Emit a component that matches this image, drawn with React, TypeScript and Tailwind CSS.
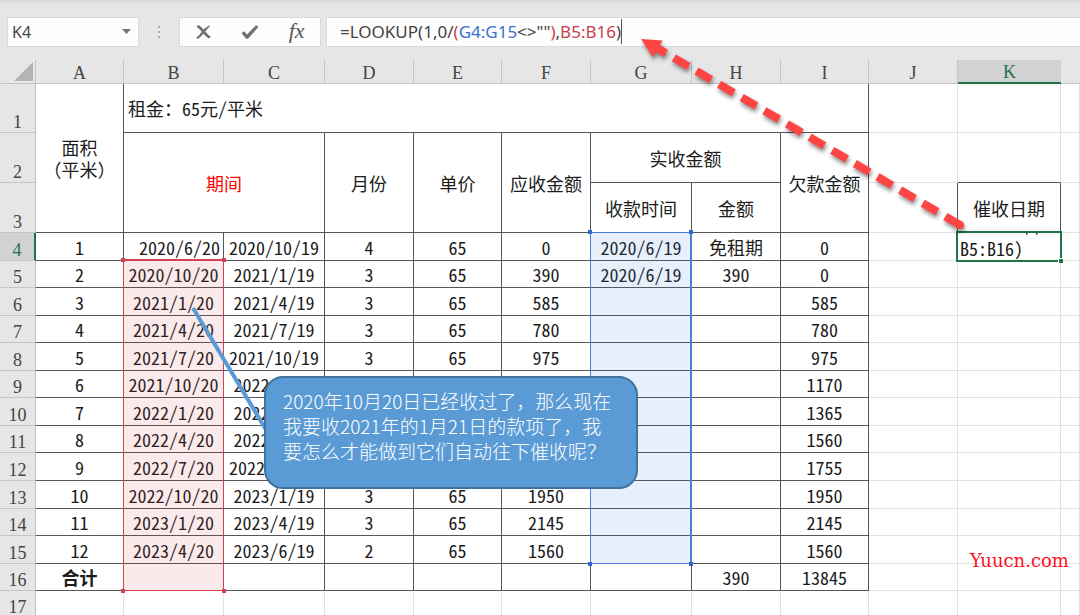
import type { ReactNode } from "react";

type Row = {
  no: number;
  height: string;
  cells: string[];
};

const rows: Row[] = [
  { no: 4, height: "h-[28px]", cells: ["1", "2020/6/20", "2020/10/19", "4", "65", "0", "2020/6/19", "免租期", "0"] },
  { no: 5, height: "h-[27px]", cells: ["2", "2020/10/20", "2021/1/19", "3", "65", "390", "2020/6/19", "390", "0"] },
  { no: 6, height: "h-[28px]", cells: ["3", "2021/1/20", "2021/4/19", "3", "65", "585", "", "", "585"] },
  { no: 7, height: "h-[27px]", cells: ["4", "2021/4/20", "2021/7/19", "3", "65", "780", "", "", "780"] },
  { no: 8, height: "h-[28px]", cells: ["5", "2021/7/20", "2021/10/19", "3", "65", "975", "", "", "975"] },
  { no: 9, height: "h-[27px]", cells: ["6", "2021/10/20", "2022/1/19", "3", "65", "1170", "", "", "1170"] },
  { no: 10, height: "h-[28px]", cells: ["7", "2022/1/20", "2022/4/19", "3", "65", "1365", "", "", "1365"] },
  { no: 11, height: "h-[27px]", cells: ["8", "2022/4/20", "2022/7/19", "3", "65", "1560", "", "", "1560"] },
  { no: 12, height: "h-[28px]", cells: ["9", "2022/7/20", "2022/10/19", "3", "65", "1755", "", "", "1755"] },
  { no: 13, height: "h-[28px]", cells: ["10", "2022/10/20", "2023/1/19", "3", "65", "1950", "", "", "1950"] },
  { no: 14, height: "h-[27px]", cells: ["11", "2023/1/20", "2023/4/19", "3", "65", "2145", "", "", "2145"] },
  { no: 15, height: "h-[28px]", cells: ["12", "2023/4/20", "2023/6/19", "2", "65", "1560", "", "", "1560"] },
  { no: 16, height: "h-[27px]", cells: ["合计", "", "", "", "", "", "", "390", "13845"] },
];

const columns = ["A", "B", "C", "D", "E", "F", "G", "H", "I", "J", "K"];

const colWidths = [
  "w-[36px]",
  "w-[88px]",
  "w-[100px]",
  "w-[101px]",
  "w-[89px]",
  "w-[88px]",
  "w-[89px]",
  "w-[101px]",
  "w-[89px]",
  "w-[88px]",
  "w-[89px]",
  "w-[103px]",
];

const dark = "border-r border-b border-[#555]";
const light = "border-r border-b border-[#e1e1e1]";

const FormulaBar = () => (
  <div className="flex h-[60px] shrink-0 items-center border-t-[3px] border-[#dcdcdc] pl-[7px] font-['Noto_Sans',sans-serif] text-[#444]">
    <div className="flex h-[30px] w-[132px] items-center border border-[#dadada] bg-[#fdfdfd]">
      <input
        aria-label="名称框"
        defaultValue="K4"
        className="w-0 flex-1 bg-transparent pl-1 text-base outline-none"
      />
      <button aria-label="展开名称框" className="flex h-full w-6 items-center justify-center">
        <svg className="h-[5px] w-[9px]" viewBox="0 0 9 5" fill="#777">
          <path d="M0 0h9L4.500 5z" />
        </svg>
      </button>
    </div>

    <div className="flex w-10 flex-col items-center gap-[3px]">
      <span className="size-[2px] bg-[#aaa]" />
      <span className="size-[2px] bg-[#aaa]" />
      <span className="size-[2px] bg-[#aaa]" />
    </div>

    <div className="flex h-[30px] w-[142px] items-center border border-[#dadada] bg-[#fdfdfd]">
      <button aria-label="取消" className="flex h-full flex-1 items-center justify-center">
        <svg className="h-[14px] w-[15px]" viewBox="0 0 15 14" fill="#707070">
          <path d="M.300 1.700 2.600.100c1.900 1.300 3.500 2.800 5 4.400C9.300 2.700 11.300 1.300 13.500.400l.500.900C12.200 2.700 10.600 4.500 9.200 6.600c1.600 2 3.400 3.800 5.600 5.300l-2.200 1.700c-1.900-1.400-3.600-3-5.100-4.800-1.500 1.800-3.400 3.600-5.700 5.100L.200 12.700C2.500 10.900 4.200 8.900 5.700 6.700 4.100 4.700 2.400 3.100.300 1.700z" />
        </svg>
      </button>
      <button aria-label="输入" className="flex h-full flex-1 items-center justify-center">
        <svg className="h-[14px] w-[18px]" viewBox="0 0 18 14" fill="#707070">
          <path d="M.500 8.200 3.200 6.200 6 9.400 15 .300l2.500 1.500L7 13.800H5.100z" />
        </svg>
      </button>
      <button
        aria-label="插入函数"
        className="flex h-full flex-1 items-center justify-center pb-[2px] font-['Liberation_Serif',serif] text-[22px] leading-none text-[#555] italic"
      >
        fx
      </button>
    </div>

    <div
      role="textbox"
      aria-label="编辑栏"
      contentEditable
      suppressContentEditableWarning
      className="ml-[5px] flex h-[30px] flex-1 items-center border border-r-0 border-[#dadada] bg-[#fdfdfd] pl-[13px] text-[17px] whitespace-nowrap outline-none"
    >
      <span>=LOOKUP(1,0/</span>
      <span className="text-[#dc3b45]">(</span>
      <span className="text-[#3c6fd0]">G4:G15</span>
      <span>&lt;&gt;""</span>
      <span className="text-[#dc3b45]">)</span>
      <span>,</span>
      <span className="text-[#c8414b]">B5:B16</span>
      <span className="border-r border-[#555]">)</span>
    </div>
  </div>
);

const RowHead = ({ no, active = false }: { no: number; active?: boolean }) => (
  <th
    scope="row"
    className={`border-b border-b-[#c4c4c4] p-0 align-bottom font-['Liberation_Serif',serif] font-normal ${
      active
        ? "border-r-2 border-r-[#217346] bg-[#d2d2d2] text-[#217346]"
        : "border-r border-r-[#bdbdbd] bg-[#e6e6e6] text-[#444]"
    }`}
  >
    {no}
  </th>
);

// empty cells to the right of the data
const Blank = ({ below = false }: { below?: boolean }) => (
  <>
    <td className={light} />
    <td className={`${light} ${below ? "border-b-[#555]" : ""}`} />
    <td className={light} />
  </>
);

const RangeBox = ({ className, handle, children }: { className: string; handle: string; children?: ReactNode }) => (
  <div className={`pointer-events-none absolute ${className}`}>
    <span className={`absolute -top-[3px] -left-[3px] size-1 ${handle}`} />
    <span className={`absolute -top-[3px] -right-[3px] size-1 ${handle}`} />
    <span className={`absolute -bottom-[3px] -left-[3px] size-1 ${handle}`} />
    <span className={`absolute -right-[3px] -bottom-[3px] size-1 ${handle}`} />
    {children}
  </div>
);

const Sheet = () => (
  <table className="w-full table-fixed border-separate border-spacing-0 text-center font-['Noto_Sans_Mono_CJK_SC','Noto_Sans_CJK_SC',monospace] text-[18px] leading-[20px] text-[#1c1c1c]">
    <colgroup>
      {colWidths.map((width, index) => (
        <col key={index} className={width} />
      ))}
      <col />
    </colgroup>
    <thead>
      <tr className="h-[24px] bg-[#e6e6e6] font-['Liberation_Serif',serif] text-[#444]">
        <td className="border-r border-b border-[#c4c4c4] p-0">
          <svg className="mr-[2px] ml-auto h-[19px] w-[19px]" viewBox="0 0 19 19" fill="#b4b4b4">
            <path d="M19 0v19H0z" />
          </svg>
        </td>
        {columns.map((name) => (
          <th
            key={name}
            scope="col"
            className={`p-0 pt-[2px] font-normal ${
              name === "K"
                ? "border-b-2 border-[#217346] bg-[#d2d2d2] text-[#217346]"
                : "border-r border-b border-[#c4c4c4]"
            }`}
          >
            {name}
          </th>
        ))}
        <td className="border-b border-[#c4c4c4]" />
      </tr>
    </thead>
    <tbody>
      <tr className="h-[49px]">
        <RowHead no={1} />
        <td rowSpan={3} className={`${dark} p-0 leading-[22px]`}>
          面积
          <br />
          （平米）
        </td>
        <td colSpan={8} className={`${dark} pl-1 text-left`}>
          租金：65元/平米
        </td>
        <Blank />
      </tr>
      <tr className="h-[50px]">
        <RowHead no={2} />
        <td colSpan={2} rowSpan={2} className={`${dark} text-[#ff0000]`}>
          期间
        </td>
        <td rowSpan={2} className={dark}>月份</td>
        <td rowSpan={2} className={dark}>单价</td>
        <td rowSpan={2} className={dark}>应收金额</td>
        <td colSpan={2} className={dark}>实收金额</td>
        <td rowSpan={2} className={dark}>欠款金额</td>
        <Blank below />
      </tr>
      <tr className="h-[50px]">
        <RowHead no={3} />
        <td className={dark}>收款时间</td>
        <td className={dark}>金额</td>
        <td className={`${light} border-r-[#555]`} />
        <td className={dark}>催收日期</td>
        <td className={light} />
      </tr>
      {rows.map((row) => (
        <tr key={row.no} className={row.height}>
          <RowHead no={row.no} active={row.no === 4} />
          {row.cells.map((value, index) => (
            <td
              key={index}
              className={`${dark} p-0 whitespace-nowrap ${value === "2020/6/20" ? "pr-[3px] text-right" : ""} ${
                value === "合计" ? "font-bold" : ""
              }`}
            >
              {value}
            </td>
          ))}
          {row.no === 4 ? (
            <>
              <td className={light} />
              <td className={`${light} p-0 pt-[2px] pl-[2px] text-left`}>B5:B16)</td>
              <td className={light} />
            </>
          ) : (
            <Blank />
          )}
        </tr>
      ))}
      <tr className="h-[27px]">
        <RowHead no={17} />
        {columns.map((name) => (
          <td key={name} className={light} />
        ))}
        <td className={light} />
      </tr>
    </tbody>
  </table>
);

const App = () => {
  return (
    <main className="flex h-screen flex-col overflow-hidden bg-[#e6e6e6]">
      <FormulaBar />
      <div className="relative min-h-0 flex-1 overflow-hidden bg-white">
        <Sheet />

        {/* Ranges used by the formula */}
        <RangeBox
          className="top-[199px] left-[123px] h-[332px] w-[101px] border border-t-2 border-[#cf4450] bg-[#d0404c]/11"
          handle="bg-[#cf4450]"
        />
        <RangeBox
          className="top-[172px] left-[590px] h-[332px] w-[102px] border border-r-2 border-[#4a7fd8] bg-[#3c78d2]/12"
          handle="bg-[#2f68c8]"
        />

        {/* Active cell */}
        <div className="pointer-events-none absolute top-[171px] left-[956px] h-[31px] w-[106px] border-2 border-[#217346]">
          {/* tail of the wrapped line above */}
          <svg className="absolute top-0 left-[67px] h-[2px] w-[14px]" viewBox="0 0 14 2" fill="#555">
            <path d="M1 0h2L2 2H1zM11 0h2l-1 2h-1z" />
          </svg>
          <span className="absolute -right-[3px] -bottom-[3px] size-[5px] border-t border-l border-white bg-[#217346]" />
        </div>

        {/* Callout */}
        <svg className="pointer-events-none absolute top-0 left-0 h-[555px] w-[1080px]" viewBox="0 60 1080 555">
          <path d="M193 308 268 433" stroke="#5b9bd5" strokeWidth="4" fill="none" />
        </svg>
        <p className="absolute top-[316px] left-[264px] h-[113px] w-[374px] rounded-[19px] border-2 border-[#41719c] bg-[#5b9bd5] pt-[10px] pl-[17px] font-['Noto_Sans_CJK_SC',sans-serif] text-[19px] leading-[25px] font-light whitespace-nowrap text-white">
          2020年10月20日已经收过了，那么现在
          <br />
          我要收2021年的1月21日的款项了，我
          <br />
          要怎么才能做到它们自动往下催收呢？
        </p>

        <span className="absolute top-[488px] left-[970px] font-['DejaVu_Serif',serif] text-[18px] leading-[25px] text-[#ff1020]">
          Yuucn.com
        </span>
      </div>

      {/* Arrow from the cell to the formula */}
      <svg
        className="pointer-events-none absolute top-0 left-0 h-[260px] w-[1080px] drop-shadow-[1px_3px_2px_rgba(0,0,0,0.45)]"
        viewBox="0 0 1080 260"
      >
        <path d="M960 225 657 48" stroke="#ff4444" strokeWidth="8" strokeDasharray="17 9.200" fill="none" />
        <circle cx="960" cy="225" r="4" fill="#ff4444" />
        <path d="M641 39 662.500 40.500 653 57.500z" fill="#ff4444" />
      </svg>
    </main>
  );
};

export default App;
